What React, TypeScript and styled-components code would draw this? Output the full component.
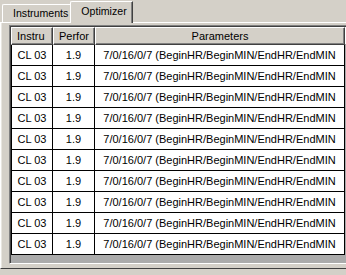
import styled, { createGlobalStyle } from "styled-components";

const GlobalStyle = createGlobalStyle`
  html, body {
    margin: 0;
    padding: 0;
    background: #d4d0c8;
    overflow: hidden;
  }
  body {
    font-family: "Liberation Sans", Arial, sans-serif;
    font-size: 11px;
    color: #000;
  }
`;

const StyledWindow = styled.div`
  width: 346px;
  height: 275px;
  display: flex;
  flex-direction: column;
  overflow: hidden;
`;

const StyledTabStrip = styled.div`
  display: flex;
  align-items: flex-end;
  height: 22px;
  padding-left: 2px;
  position: relative;
  z-index: 2;
`;

const StyledTab = styled.div<{ $active?: boolean }>`
  box-sizing: border-box;
  height: ${(p) => (p.$active ? "22px" : "18px")};
  margin-bottom: ${(p) => (p.$active ? "-1px" : "0")};
  margin-left: ${(p) => (p.$active ? "-2px" : "0")};
  padding: ${(p) => (p.$active ? "3px 5px 0 10px" : "2px 3px 0 10px")};
  background: #d4d0c8;
  border-top: 1px solid #fff;
  border-left: 1px solid #fff;
  border-right: 1px solid #404040;
  box-shadow: inset -1px 0 0 #808080;
  border-top-left-radius: 2px;
  font-size: 10.6px;
  line-height: 13px;
  white-space: nowrap;
`;

const StyledPanel = styled.div`
  box-sizing: border-box;
  height: 247px;
  width: 360px;
  border-top: 1px solid #fff;
  border-left: 1px solid #fff;
  box-shadow: inset 1px 0 0 #e8e6e0;
  border-bottom: 1px solid #404040;
  padding: 2px 0 4px 8px;
  display: flex;
`;

const StyledGrid = styled.div`
  box-sizing: border-box;
  flex: 1;
  background: #ababab;
  border-top: 1px solid #808080;
  border-left: 1px solid #808080;
  border-bottom: 1px solid #fff;
  box-shadow: inset 1px 1px 0 #404040;
  padding: 1px 0 0 1px;
  overflow: hidden;
  display: flex;
  flex-direction: column;
`;

const StyledRow = styled.div`
  display: flex;
`;

const StyledHeaderCell = styled.div<{ $width: number; $align?: string }>`
  box-sizing: border-box;
  flex: 0 0 ${(p) => p.$width}px;
  height: 18px;
  background: #d4d0c8;
  border-top: 1px solid #fff;
  border-left: 1px solid #fff;
  border-right: 1px solid #404040;
  border-bottom: 1px solid #404040;
  box-shadow: inset -1px -1px 0 #808080;
  padding: 0 5px;
  line-height: 16px;
  text-align: ${(p) => p.$align || "left"};
  white-space: nowrap;
  overflow: hidden;
`;

const StyledCell = styled.div<{ $width: number }>`
  box-sizing: border-box;
  flex: 0 0 ${(p) => p.$width}px;
  height: 21px;
  background: #fff;
  border-right: 1px solid #000;
  border-bottom: 1px solid #000;
  line-height: 20px;
  text-align: center;
  white-space: nowrap;
  overflow: hidden;
  &:first-child {
    border-left: 1px solid #000;
  }
`;

const columns = [
  { title: "Instru", width: 42, align: "left" },
  { title: "Perfor", width: 42, align: "left" },
  { title: "Parameters", width: 250, align: "center" },
];

const rows = Array.from({ length: 10 }, () => ["CL 03", "1.9", "7/0/16/0/7 (BeginHR/BeginMIN/EndHR/EndMIN"]);

function App() {
  return (
    <StyledWindow>
      <GlobalStyle />
      <StyledTabStrip>
        <StyledTab>Instruments</StyledTab>
        <StyledTab $active>Optimizer</StyledTab>
      </StyledTabStrip>
      <StyledPanel>
        <StyledGrid>
          <StyledRow>
            {columns.map((c) => (
              <StyledHeaderCell key={c.title} $width={c.width} $align={c.align}>
                {c.title}
              </StyledHeaderCell>
            ))}
            <StyledHeaderCell $width={40} />
          </StyledRow>
          {rows.map((r, i) => (
            <StyledRow key={i}>
              {r.map((v, j) => (
                <StyledCell key={j} $width={columns[j].width}>
                  {v}
                </StyledCell>
              ))}
            </StyledRow>
          ))}
        </StyledGrid>
      </StyledPanel>
    </StyledWindow>
  );
}

export default App;
